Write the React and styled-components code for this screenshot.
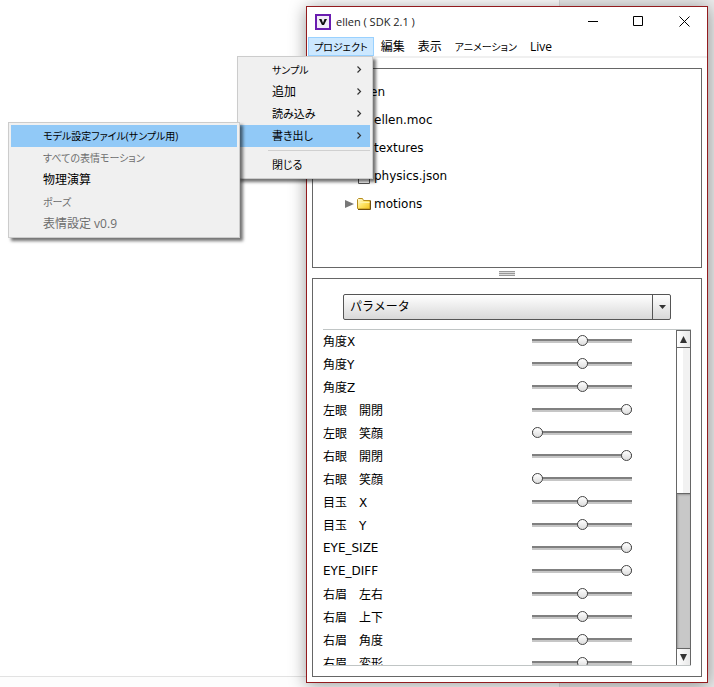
import React, { useState } from "react";
import styled, { createGlobalStyle } from "styled-components";

const treeNodes = [
  { name: "ellen.moc", kind: "file" },
  { name: "textures", kind: "folder", expandable: true },
  { name: "physics.json", kind: "file" },
  { name: "motions", kind: "folder", expandable: true },
];

const menuBarItems = [
  { label: "編集" },
  { label: "表示" },
  { label: "アニメーション", size: 10 },
  { label: "Live" },
];

// kana labels are set smaller, like the compact kana of a system UI font
const projectMenu = [
  { label: "サンプル", size: 10, hasChildren: true },
  { label: "追加", hasChildren: true },
  { label: "読み込み", size: 11, hasChildren: true },
  {
    label: "書き出し",
    size: 11,
    hasChildren: true,
    active: true,
    children: [
      { label: "モデル設定ファイル(サンプル用)", size: 10, active: true },
      { label: "すべての表情モーション", size: 10, disabled: true },
      { label: "物理演算" },
      { label: "ポーズ", size: 10, disabled: true },
      { label: "表情設定 v0.9", disabled: true },
    ],
  },
  { separator: true },
  { label: "閉じる", size: 11 },
];

const initialParams = [
  { name: "角度X", value: 50 },
  { name: "角度Y", value: 50 },
  { name: "角度Z", value: 50 },
  { name: "左眼　開閉", value: 100 },
  { name: "左眼　笑顔", value: 0 },
  { name: "右眼　開閉", value: 100 },
  { name: "右眼　笑顔", value: 0 },
  { name: "目玉　X", value: 50 },
  { name: "目玉　Y", value: 50 },
  { name: "EYE_SIZE", value: 100 },
  { name: "EYE_DIFF", value: 100 },
  { name: "右眉　左右", value: 50 },
  { name: "右眉　上下", value: 50 },
  { name: "右眉　角度", value: 50 },
  { name: "右眉　変形", value: 50 },
];

const FolderIcon = () => (
  <svg width="14" height="12" viewBox="0 0 14 12">
    <defs>
      <linearGradient id="folder" x1="0" y1="0" x2="1" y2="1">
        <stop offset="0" stopColor="#fffbe0" />
        <stop offset="0.5" stopColor="#ffe566" />
        <stop offset="1" stopColor="#f3c21c" />
      </linearGradient>
    </defs>
    <path
      d="M.5 10.5v-9l1-1h4l1 2h6.500v8.500h-12z"
      fill="url(#folder)"
      stroke="#b78d1c"
    />
    <path d="M1 11.500h12.500v-9" fill="none" stroke="#75520c" />
    <path d="M1.500 4.500h11" stroke="#fff3a8" />
  </svg>
);

const FileIcon = () => (
  <svg width="14" height="16" viewBox="0 0 14 16">
    <path d="M1.500.5h8l3 3v12h-11z" fill="#fff" stroke="#555" />
    <path d="M9.500.5v3h3" fill="none" stroke="#555" />
  </svg>
);

const Chevron = () => (
  <svg width="6" height="9" viewBox="0 0 6 9">
    <path d="M1.500 1.500l3 3-3 3" fill="none" stroke="#333" strokeWidth="1.200" />
  </svg>
);

const MenuList = ({ items }) =>
  items.map((item, i) =>
    item.separator ? (
      <Separator key={i} role="separator" />
    ) : (
      <MenuEntry key={item.label} role="none">
        <MenuButton
          role="menuitem"
          $active={item.active}
          $size={item.size}
          disabled={item.disabled}
        >
          {item.label}
          {item.hasChildren && <Chevron />}
        </MenuButton>
        {item.children && (
          <SubMenu role="menu">
            <MenuList items={item.children} />
          </SubMenu>
        )}
      </MenuEntry>
    )
  );

const TitleBar = () => (
  <TitleRow>
    <Logo width="16" height="16" viewBox="0 0 16 16">
      <rect x="1" y="1" width="14" height="14" fill="#f2ecf8" stroke="#6a1cb0" strokeWidth="2" />
      <path d="M4 5h2.500L8 9l1.500-4H12l-3 6H7z" fill="#111" />
    </Logo>
    <Title>ellen ( SDK 2.1 )</Title>
    <WindowButton aria-label="Minimize">
      <svg width="11" height="11" viewBox="0 0 11 11">
        <path d="M1 5.500h10" stroke="#000" />
      </svg>
    </WindowButton>
    <WindowButton aria-label="Maximize">
      <svg width="11" height="11" viewBox="0 0 11 11">
        <path d="M.5.5h9v9h-9z" fill="none" stroke="#000" />
      </svg>
    </WindowButton>
    <WindowButton aria-label="Close">
      <svg width="11" height="11" viewBox="0 0 11 11">
        <path d="M.5.5l10 10M10.500.5l-10 10" stroke="#000" />
      </svg>
    </WindowButton>
  </TitleRow>
);

const ProjectTree = () => (
  <TreePanel>
    <Tree role="tree">
      <TreeItem role="treeitem" $depth={0}>
        <Twisty $open />
        <FolderIcon />
        ellen
      </TreeItem>
      {treeNodes.map((node) => (
        <TreeItem key={node.name} role="treeitem" $depth={1}>
          <Twisty $hidden={!node.expandable} />
          {node.kind === "folder" ? <FolderIcon /> : <FileIcon />}
          {node.name}
        </TreeItem>
      ))}
    </Tree>
  </TreePanel>
);

const ParameterPanel = () => {
  const [params, setParams] = useState(initialParams);

  const setValue = (name, value) =>
    setParams(params.map((p) => (p.name === name ? { ...p, value } : p)));

  return (
    <ParamsPanel>
      <Combo>
        <ComboSelect aria-label="表示">
          <option>パラメータ</option>
        </ComboSelect>
        <ComboArrow>
          <svg width="7" height="4" viewBox="0 0 7 4">
            <path d="M0 0h7L3.500 4z" fill="#333" />
          </svg>
        </ComboArrow>
      </Combo>
      <ScrollArea>
        <Rows>
          {params.map((p) => (
            <Row key={p.name}>
              <span>{p.name}</span>
              <Slider
                type="range"
                value={p.value}
                onChange={(e) => setValue(p.name, Number(e.target.value))}
              />
            </Row>
          ))}
        </Rows>
        <Scrollbar>
          <ScrollButton aria-label="Scroll up">
            <svg width="7" height="7" viewBox="0 0 7 7">
              <path d="M0 7h7L3.500 0z" fill="#333" />
            </svg>
          </ScrollButton>
          <ScrollThumb />
          <ScrollTrack />
          <ScrollButton aria-label="Scroll down" $bottom>
            <svg width="7" height="7" viewBox="0 0 7 7">
              <path d="M0 0h7L3.500 7z" fill="#333" />
            </svg>
          </ScrollButton>
        </Scrollbar>
      </ScrollArea>
    </ParamsPanel>
  );
};

export default () => (
  <Desktop>
    <GlobalStyle />
    <Backdrop>
      <BackdropPage />
      <BackdropFooter />
    </Backdrop>
    <AppWindow>
      <TitleBar />
      <MenuBar role="menubar">
        <MenuBarItem role="none">
          <MenuBarButton role="menuitem" aria-expanded="true" $open $size={10}>
            プロジェクト
          </MenuBarButton>
          <DropDown role="menu">
            <MenuList items={projectMenu} />
          </DropDown>
        </MenuBarItem>
        {menuBarItems.map((item) => (
          <MenuBarItem key={item.label} role="none">
            <MenuBarButton role="menuitem" $size={item.size}>
              {item.label}
            </MenuBarButton>
          </MenuBarItem>
        ))}
      </MenuBar>
      <Content>
        <ProjectTree />
        <Splitter>
          <Grip />
        </Splitter>
        <ParameterPanel />
      </Content>
    </AppWindow>
  </Desktop>
);

const GlobalStyle = createGlobalStyle`
  * {
    box-sizing: border-box;
  }

  body {
    margin: 0;
    color: #000;
    font-family: "Open Sans", "Noto Sans CJK JP", sans-serif;
    font-size: 12px;
  }

  button, select {
    margin: 0;
    padding: 0;
    border: 0;
    color: inherit;
    background: none;
    font: inherit;
  }

  ul {
    margin: 0;
    padding: 0;
    list-style: none;
  }

  svg {
    flex: none;
  }
`;

const Desktop = styled.div`
  display: grid;
  grid-template: 100vh / 100%;
  overflow: hidden;
  background: #ebebeb;
`;

const Backdrop = styled.div`
  display: flex;
  flex-direction: column;
  grid-area: 1 / 1;
  width: 560px;
  border-right: 1px solid #dcdcdc;
`;

const BackdropPage = styled.div`
  flex: 1;
  background: #fff;
  border-bottom: 1px solid #e2e2e2;
`;

const BackdropFooter = styled.div`
  height: 10px;
  background: #fdfdfd;
`;

const AppWindow = styled.main`
  display: flex;
  flex-direction: column;
  grid-area: 1 / 1;
  margin: 6px 6px 4px 306px;
  border: 1px solid #931b1e;
  background: #fff;
  box-shadow: 0 2px 16px rgba(0, 0, 0, 0.4);
`;

const TitleRow = styled.header`
  display: flex;
  align-items: center;
  height: 30px;
  padding-left: 8px;
`;

const Logo = styled.svg`
  margin-right: 5px;
`;

const Title = styled.span`
  flex: 1;
  padding-bottom: 2px;
  color: #222;
  font-size: 11px;
`;

const WindowButton = styled.button`
  display: flex;
  align-items: center;
  justify-content: center;
  width: 46px;
  height: 30px;
  padding-bottom: 2px;
`;

const MenuBar = styled.ul`
  display: flex;
  gap: 1px;
  height: 21px;
  padding-left: 1px;
  border-bottom: 2px solid #f0f0f0;
`;

const MenuBarItem = styled.li`
  position: relative;
`;

const MenuBarButton = styled.button`
  display: block;
  height: 19px;
  padding: 0 5px;
  border: 1px solid ${({ $open }) => ($open ? "#99d1ff" : "transparent")};
  background: ${({ $open }) => ($open ? "#cce8ff" : "none")};
  font-size: ${({ $size = 12 }) => $size}px;
  line-height: 16px;
  white-space: nowrap;
  font-feature-settings: "palt";
`;

const DropDown = styled.ul`
  position: absolute;
  z-index: 1;
  top: 100%;
  left: -71px;
  width: 136px;
  padding: 2px;
  border: 1px solid #ccc;
  background: #f0f0f0;
  box-shadow: 3px 3px 3px rgba(0, 0, 0, 0.55);
`;

const SubMenu = styled(DropDown)`
  top: -3px;
  right: 100%;
  left: auto;
  width: 232px;
`;

const MenuEntry = styled.li`
  position: relative;
`;

const MenuButton = styled.button`
  display: flex;
  align-items: center;
  justify-content: space-between;
  width: 100%;
  height: 22px;
  padding: 0 8px 2px 32px;
  background: ${({ $active }) => ($active ? "#91c9f7" : "none")};
  font-size: ${({ $size = 12 }) => $size}px;
  white-space: nowrap;
  font-feature-settings: "palt";

  &:disabled {
    color: #6d6d6d;
  }
`;

const Separator = styled.li`
  height: 1px;
  margin: 3px 0 3px 28px;
  background: #d0d0d0;
`;

const Content = styled.div`
  display: flex;
  flex: 1;
  flex-direction: column;
  min-height: 0;
  padding: 10px 5px 5px;
  font-family: "DejaVu Sans", "Noto Sans CJK JP", sans-serif;
`;

const Panel = styled.section`
  border: 1px solid #666;
`;

const TreePanel = styled(Panel)`
  flex: none;
  height: 200px;
  padding: 9px 10px;
`;

const Tree = styled.ul`
  font-size: 12px;
`;

const TreeItem = styled.li`
  display: flex;
  align-items: center;
  gap: 3px;
  height: 28px;
  padding-left: ${({ $depth }) => 4 + $depth * 18}px;
`;

const Twisty = styled.span`
  width: 9px;
  height: 8px;
  background: #777;
  clip-path: ${({ $open }) =>
    $open ? "polygon(0 0, 100% 0, 50% 100%)" : "polygon(0 0, 100% 50%, 0 100%)"};
  visibility: ${({ $hidden }) => ($hidden ? "hidden" : "visible")};
`;

const Splitter = styled.div`
  display: flex;
  align-items: center;
  justify-content: center;
  flex: none;
  height: 10px;
`;

const Grip = styled.div`
  width: 16px;
  height: 5px;
  border-top: 1px solid #999;
  border-bottom: 1px solid #999;
  background: linear-gradient(#ddd 1px, #999 1px, #999 2px, #ddd 2px);
`;

const ParamsPanel = styled(Panel)`
  display: flex;
  flex: 1;
  flex-direction: column;
  min-height: 0;
  padding: 15px 10px 10px;
`;

const Combo = styled.div`
  display: grid;
  grid-template-columns: 1fr 19px;
  margin: 0 20px 9px;
`;

const ComboSelect = styled.select`
  grid-area: 1 / 1 / 2 / 3;
  height: 26px;
  padding-left: 6px;
  border: 1px solid #555;
  border-radius: 2px;
  background: linear-gradient(#fff, #d8d8d8);
  appearance: none;
`;

const ComboArrow = styled.span`
  display: flex;
  align-items: center;
  justify-content: center;
  grid-area: 1 / 2;
  border-left: 1px solid #555;
  pointer-events: none;
`;

const ScrollArea = styled.div`
  display: flex;
  flex: 1;
  min-height: 0;
  border-top: 1px solid #c0c5c5;
  border-bottom: 1px solid #c0c5c5;
`;

const Rows = styled.div`
  flex: 1;
  overflow: hidden;
`;

const Row = styled.label`
  display: flex;
  align-items: center;
  justify-content: space-between;
  height: 23px;
  padding: 0 44px 2px 0;
`;

const Slider = styled.input`
  width: 100px;
  height: 12px;
  margin: 0;
  background: linear-gradient(#808080 2px, #c6c6c6 2px) center / 100% 4px no-repeat;
  appearance: none;

  &::-webkit-slider-thumb {
    width: 11px;
    height: 11px;
    border: 1px solid #444;
    border-radius: 50%;
    background: linear-gradient(#fff, #ddd);
    appearance: none;
  }
`;

const Scrollbar = styled.div`
  display: flex;
  flex-direction: column;
  width: 15px;
  border: 1px solid #666;
  border-bottom: 0;
`;

const ScrollButton = styled.button`
  display: flex;
  align-items: center;
  justify-content: center;
  height: 17px;
  background: linear-gradient(90deg, #fff, #e8e8e8);
  border-${({ $bottom }) => ($bottom ? "top" : "bottom")}: 1px solid #666;
`;

const ScrollThumb = styled.div`
  flex: 145;
  border-bottom: 1px solid #666;
  background: linear-gradient(90deg, #fff 45%, #f2f2f2 45%);
`;

const ScrollTrack = styled.div`
  flex: 154;
  background: #c8c8c8;
  box-shadow: inset 1px 1px 2px #999;
`;
